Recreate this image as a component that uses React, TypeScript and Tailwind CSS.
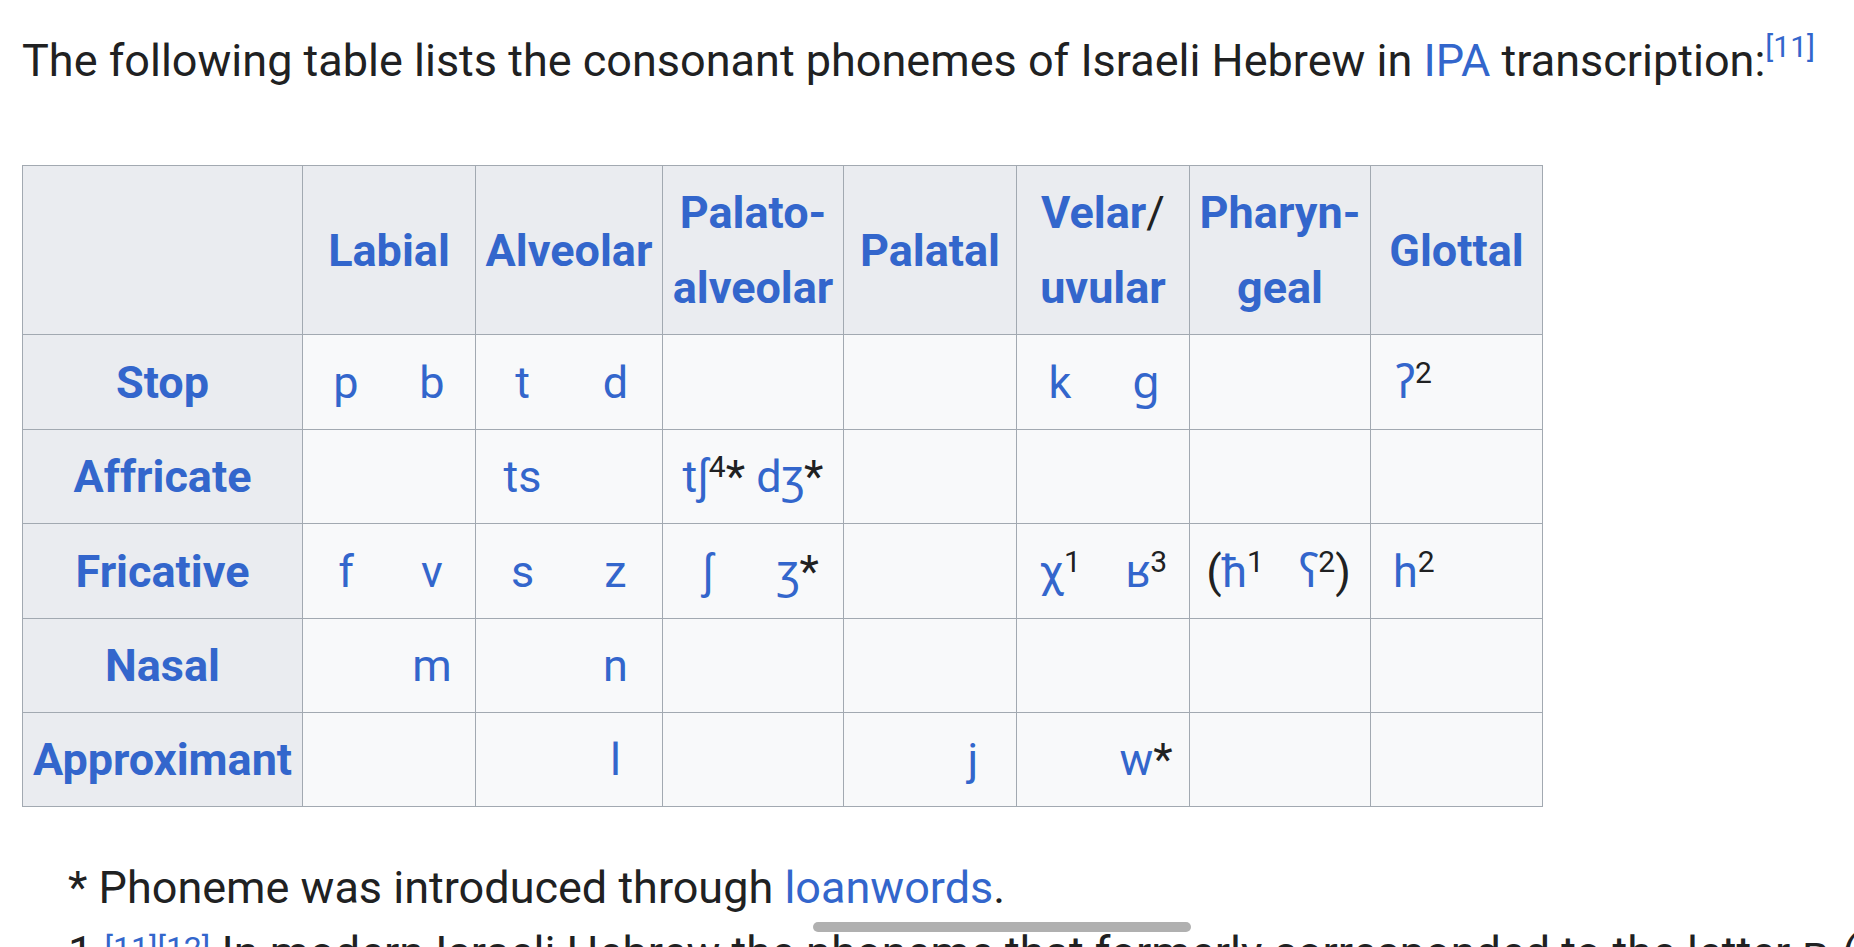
import React from "react";

const F = "font-['Roboto','Noto_Sans','DejaVu_Sans',sans-serif]";

type Half = React.ReactNode;

function Sup({ children }: { children: React.ReactNode }) {
  return <sup className="text-[30px] text-[#202122] -top-[15px]">{children}</sup>;
}

function HeadCell({ children }: { children: React.ReactNode }) {
  return (
    <div className="bg-[#eaecf0] flex items-center justify-center text-center font-bold text-[#3366cc] text-[45px] leading-[75px]">
      <div>{children}</div>
    </div>
  );
}

function Cell({ a, b, span }: { a?: Half; b?: Half; span?: Half }) {
  if (span !== undefined) {
    return (
      <div className="bg-[#f8f9fa] flex items-center justify-center text-[45px] leading-[75px] text-[#3366cc] whitespace-nowrap">
        {span}
      </div>
    );
  }
  return (
    <div className="bg-[#f8f9fa] grid grid-cols-2 text-[45px] leading-[75px] text-[#3366cc]">
      <div className="flex items-center justify-center whitespace-nowrap">{a}</div>
      <div className="flex items-center justify-center whitespace-nowrap">{b}</div>
    </div>
  );
}

const Star = () => <span className="text-[#202122]">*</span>;

export default function App() {
  return (
    <div className={`${F} relative w-[1854px] h-[947px] overflow-hidden bg-white text-[#202122]`}>
      <div className="pl-[22px] pt-[24px]">
        <p className="text-[45px] leading-[74px] whitespace-nowrap">
          The following table lists the consonant phonemes of Israeli Hebrew in{" "}
          <a className="text-[#3366cc]">IPA</a> transcription:
          <sup className="text-[30px] text-[#3366cc] -top-[19px]">[11]</sup>
        </p>

        <div className="mt-[67px] w-fit grid grid-cols-[279px_172px_186px_180px_172px_172px_180px_171px] grid-rows-[168px_94px_93px_94px_93px_93px] gap-px p-px bg-[#a2a9b1]">
          {/* header row */}
          <div className="bg-[#eaecf0]" />
          <HeadCell>Labial</HeadCell>
          <HeadCell>Alveolar</HeadCell>
          <HeadCell>
            Palato-
            <br />
            alveolar
          </HeadCell>
          <HeadCell>Palatal</HeadCell>
          <HeadCell>
            Velar<span className="font-normal text-[#202122]">/</span>
            <br />
            uvular
          </HeadCell>
          <HeadCell>
            Pharyn-
            <br />
            geal
          </HeadCell>
          <HeadCell>Glottal</HeadCell>

          {/* Stop */}
          <HeadCell>Stop</HeadCell>
          <Cell a="p" b="b" />
          <Cell a="t" b="d" />
          <Cell />
          <Cell />
          <Cell a="k" b="ɡ" />
          <Cell />
          <Cell
            a={
              <span>
                ʔ<Sup>2</Sup>
              </span>
            }
          />

          {/* Affricate */}
          <HeadCell>Affricate</HeadCell>
          <Cell />
          <Cell a="ts" />
          <Cell
            span={
              <span>
                tʃ<Sup>4</Sup>
                <Star /> dʒ
                <Star />
              </span>
            }
          />
          <Cell />
          <Cell />
          <Cell />
          <Cell />

          {/* Fricative */}
          <HeadCell>Fricative</HeadCell>
          <Cell a="f" b="v" />
          <Cell a="s" b="z" />
          <Cell
            a="ʃ"
            b={
              <span>
                ʒ<Star />
              </span>
            }
          />
          <Cell />
          <Cell
            a={
              <span>
                χ<Sup>1</Sup>
              </span>
            }
            b={
              <span>
                ʁ<Sup>3</Sup>
              </span>
            }
          />
          <Cell
            a={
              <span>
                <span className="text-[#202122]">(</span>ħ<Sup>1</Sup>
              </span>
            }
            b={
              <span>
                ʕ<Sup>2</Sup>
                <span className="text-[#202122]">)</span>
              </span>
            }
          />
          <Cell
            a={
              <span>
                h<Sup>2</Sup>
              </span>
            }
          />

          {/* Nasal */}
          <HeadCell>Nasal</HeadCell>
          <Cell b="m" />
          <Cell b="n" />
          <Cell />
          <Cell />
          <Cell />
          <Cell />
          <Cell />

          {/* Approximant */}
          <HeadCell>Approximant</HeadCell>
          <Cell />
          <Cell b="l" />
          <Cell />
          <Cell b="j" />
          <Cell
            b={
              <span>
                w<Star />
              </span>
            }
          />
          <Cell />
          <Cell />
        </div>

        <div className="pl-[46px] mt-[44px] text-[45px] leading-[74px] whitespace-nowrap">
          <p>
            * Phoneme was introduced through <a className="text-[#3366cc]">loanwords</a>.
          </p>
          <p className="mt-[-9px]">
            1 <a className="relative -top-[9px] text-[#3366cc] text-[32px]">[11][12]</a> In modern Israeli Hebrew the
            phoneme that formerly corresponded to the letter ח (which is also the case in other dialects) is pronounced
            as a fricative
          </p>
        </div>
      </div>

      <div className="absolute left-[813px] top-[922px] w-[378px] h-[10px] rounded-full bg-[#b0b0b0]" />
    </div>
  );
}
